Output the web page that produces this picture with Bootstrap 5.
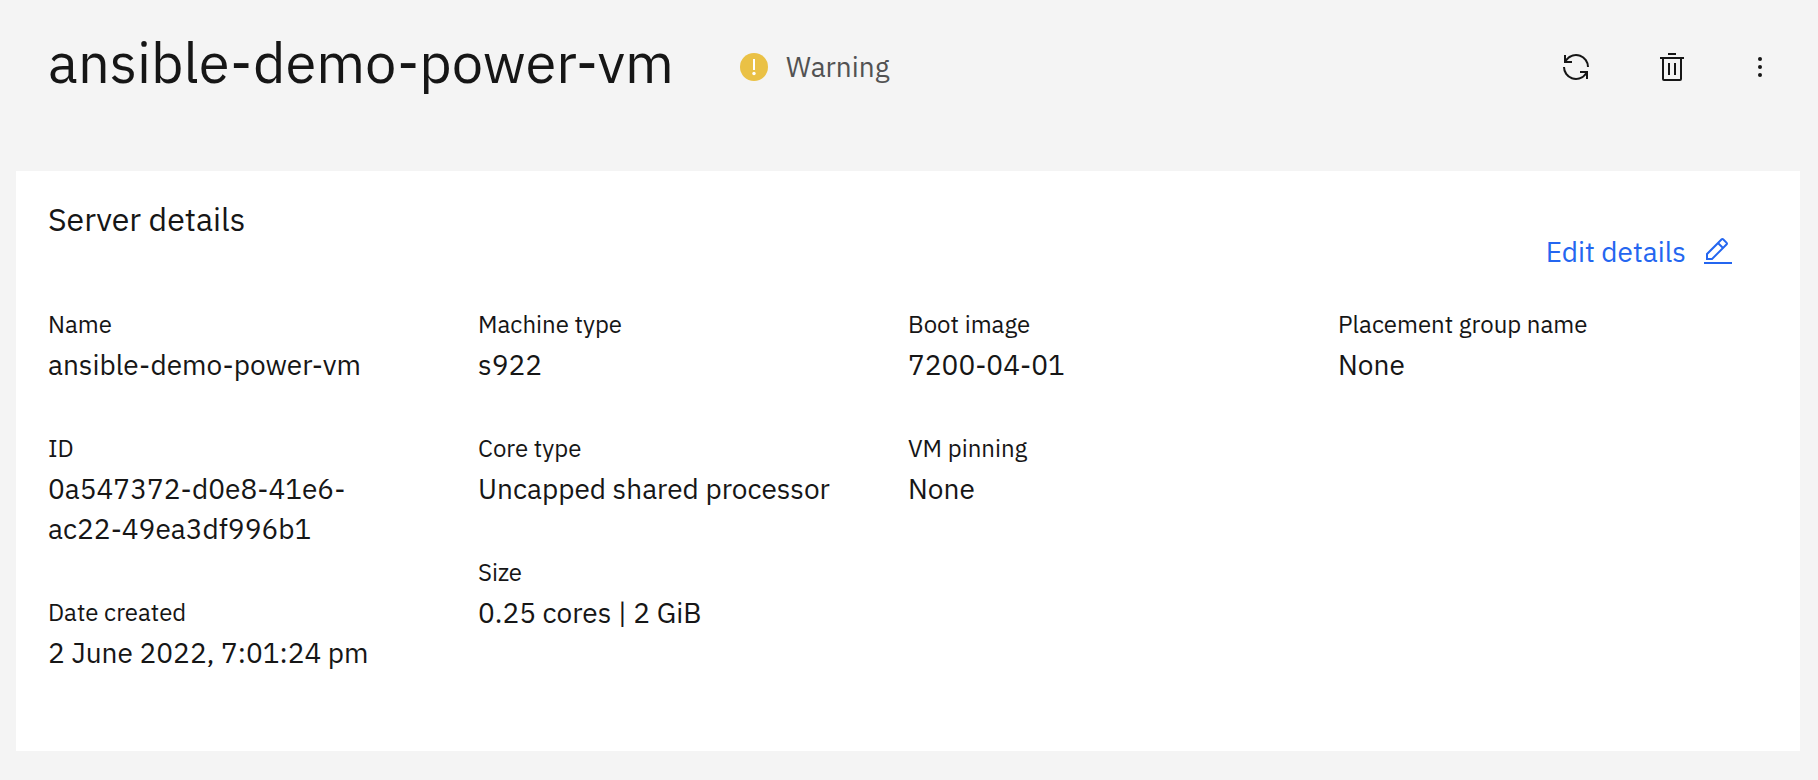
<!DOCTYPE html>
<html lang="en">
<head>
<meta charset="utf-8">
<meta name="viewport" content="width=device-width, initial-scale=1">
<title>ansible-demo-power-vm</title>
<link href="https://cdn.jsdelivr.net/npm/bootstrap@5.3.0/dist/css/bootstrap.min.css" rel="stylesheet">
<style>
body { background: #f4f4f4; color: #161616; font-family: "IBM Plex Sans", "Noto Sans", sans-serif; font-size: 28px; line-height: 40px; }
svg { display: block; width: 32px; height: 32px; flex: none; fill: currentColor; }
.page-top { padding: 27px 42px 74px 48px; }
.page-title { font-size: 56px; line-height: 70px; font-weight: 400; }
.status { gap: 16px; margin: 20px 0 0 64px; color: #525252; }
.tool-btn { color: #161616; background: none; border: 0; padding: 0; }
.tools { gap: 56px; margin-top: 24px; }
.tool-btn:first-child { margin-right: 8px; }
.panel { background: #fff; margin: 0 18px 29px 16px; padding: 28px 32px 31px; }
.panel-title { font-size: 32px; line-height: 40px; font-weight: 400; }
.edit-link { color: #2466f0; gap: 16px; margin: -7px 34px 0 0; }
.facts { margin-top: 36px; }
.facts dl > div { padding-right: 64px; margin-bottom: 47px; }
.facts dt { font-size: 24px; line-height: 32px; font-weight: 400; margin-bottom: 5px; }
</style>
</head>
<body>
<header class="page-top d-flex flex-wrap align-items-start">
  <h1 class="page-title mb-0">ansible-demo-power-vm</h1>
  <div class="status d-flex align-items-center">
    <svg viewBox="0 0 32 32" aria-hidden="true"><circle cx="16" cy="16" r="14" fill="#eac145"/><path fill="#fff" d="M15 8h2v11h-2z"/><circle cx="16" cy="22.5" r="1.7" fill="#fff"/></svg>
    <span>Warning</span>
  </div>
  <div class="tools d-flex ms-auto">
    <button type="button" class="tool-btn" aria-label="Refresh"><svg viewBox="0 0 32 32"><path d="M12 10H6.78A11 11 0 0 1 27 16h2A13 13 0 0 0 6 7.68V4H4v8h8zM20 22h5.22A11 11 0 0 1 5 16H3a13 13 0 0 0 23 8.32V28h2v-8h-8z"/></svg></button>
    <button type="button" class="tool-btn" aria-label="Delete"><svg viewBox="0 0 32 32"><path d="M12 12h2v12h-2zM18 12h2v12h-2zM4 6v2h2v20a2 2 0 0 0 2 2h16a2 2 0 0 0 2-2V8h2V6zM8 28V8h16v20zM12 2h8v2h-8z"/></svg></button>
    <button type="button" class="tool-btn" aria-label="More actions"><svg viewBox="0 0 32 32"><circle cx="16" cy="8" r="2"/><circle cx="16" cy="16" r="2"/><circle cx="16" cy="24" r="2"/></svg></button>
  </div>
</header>
<main class="panel">
  <h2 class="panel-title mb-0">Server details</h2>
  <div class="d-flex justify-content-end">
    <a href="#" class="edit-link d-flex align-items-center text-decoration-none">Edit details
      <svg viewBox="0 0 32 32" aria-hidden="true"><path d="M2 26h28v2H2zM25.4 9c.8-.8.8-2 0-2.8l-3.6-3.6c-.8-.8-2-.8-2.8 0l-15 15V24h6.4zM20.4 4 24 7.6l-3 3L17.4 7zM6 22v-3.6l10-10 3.6 3.6-10 10z"/></svg>
    </a>
  </div>
  <div class="facts row g-0">
    <dl class="col-12 col-sm-6 col-lg-3 mb-0">
      <div><dt>Name</dt><dd class="mb-0">ansible-demo-power-vm</dd></div>
      <div><dt>ID</dt><dd class="mb-0">0a547372-d0e8-41e6-ac22-49ea3df996b1</dd></div>
      <div><dt>Date created</dt><dd class="mb-0">2 June 2022, 7:01:24 pm</dd></div>
    </dl>
    <dl class="col-12 col-sm-6 col-lg-3 mb-0">
      <div><dt>Machine type</dt><dd class="mb-0">s922</dd></div>
      <div><dt>Core type</dt><dd class="mb-0">Uncapped shared processor</dd></div>
      <div><dt>Size</dt><dd class="mb-0">0.25 cores | 2 GiB</dd></div>
    </dl>
    <dl class="col-12 col-sm-6 col-lg-3 mb-0">
      <div><dt>Boot image</dt><dd class="mb-0">7200-04-01</dd></div>
      <div><dt>VM pinning</dt><dd class="mb-0">None</dd></div>
    </dl>
    <dl class="col-12 col-sm-6 col-lg-3 mb-0">
      <div><dt>Placement group name</dt><dd class="mb-0">None</dd></div>
    </dl>
  </div>
</main>
<script src="https://cdn.jsdelivr.net/npm/bootstrap@5.3.0/dist/js/bootstrap.bundle.min.js"></script>
</body>
</html>
